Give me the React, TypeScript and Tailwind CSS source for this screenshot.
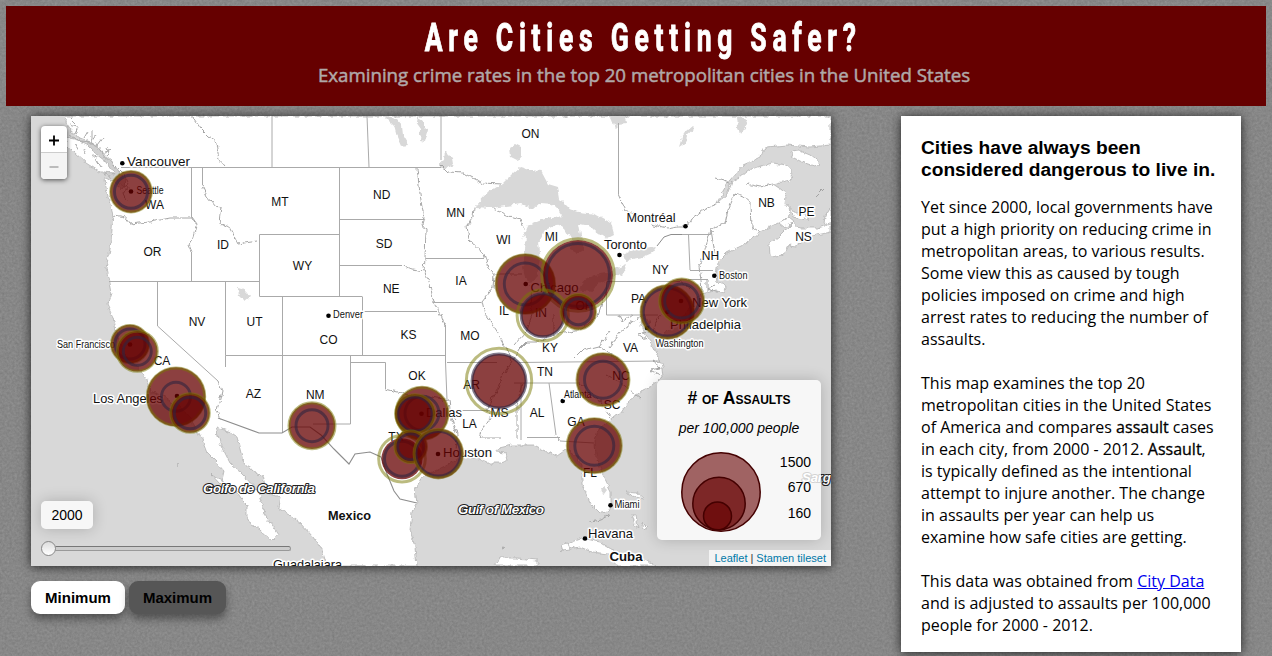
import React from 'react';

type Circle = { x: number; y: number; max: number; now: number; min: number };
type Label = { t: string; x: number; y: number; s?: number; w?: number; bold?: boolean };

const circles: Circle[] = [
  { x: 131, y: 191.7, max: 20.3, now: 21, min: 16.5 },
  { x: 130, y: 344, max: 18.5, now: 19.2, min: 15 },
  { x: 137.3, y: 351.3, max: 20, now: 20.3, min: 14 },
  { x: 176, y: 396.7, max: 28.7, now: 29.5, min: 14.5 },
  { x: 190, y: 413, max: 19.3, now: 19.8, min: 15.7 },
  { x: 312, y: 425.7, max: 23, now: 23.2, min: 16 },
  { x: 422, y: 413.3, max: 26, now: 26.7, min: 17 },
  { x: 415, y: 414, max: 19.3, now: 20, min: 17 },
  { x: 402, y: 458.7, max: 23.3, now: 20.5, min: 17.5 },
  { x: 410.7, y: 446.7, max: 15.8, now: 16.3, min: 13 },
  { x: 438.3, y: 453.7, max: 24.2, now: 25, min: 22.3 },
  { x: 499, y: 381, max: 32.7, now: 27, min: 27 },
  { x: 525.3, y: 284, max: 29.2, now: 30, min: 21 },
  { x: 578, y: 275, max: 36.3, now: 35, min: 31.5 },
  { x: 542.7, y: 315.3, max: 25.6, now: 21.5, min: 21.5 },
  { x: 578.3, y: 311.7, max: 17.3, now: 17.8, min: 13 },
  { x: 667.3, y: 312, max: 26.2, now: 27, min: 24 },
  { x: 681.7, y: 301, max: 22, now: 22.5, min: 17 },
  { x: 603, y: 379.7, max: 26, now: 26.6, min: 18.5 },
  { x: 594.3, y: 445.7, max: 27, now: 27.6, min: 19.5 },
];

const states: Label[] = [
  { t: 'WA', x: 154.5, y: 209 }, { t: 'OR', x: 152.5, y: 255.5 }, { t: 'ID', x: 223, y: 248.5 },
  { t: 'MT', x: 280, y: 205.5 }, { t: 'WY', x: 302.5, y: 270 }, { t: 'NV', x: 197, y: 325.5 },
  { t: 'UT', x: 254.5, y: 325.5 }, { t: 'CA', x: 162, y: 365 }, { t: 'AZ', x: 253.5, y: 398 },
  { t: 'NM', x: 315.3, y: 399 }, { t: 'CO', x: 328.5, y: 344.2 }, { t: 'ND', x: 381.7, y: 198.5 },
  { t: 'SD', x: 384, y: 248 }, { t: 'NE', x: 391.3, y: 293 }, { t: 'KS', x: 408.5, y: 338.5 },
  { t: 'OK', x: 417, y: 379.5 }, { t: 'TX', x: 396, y: 441 }, { t: 'MN', x: 455.5, y: 217 },
  { t: 'IA', x: 461, y: 285 }, { t: 'MO', x: 470, y: 339.5 }, { t: 'WI', x: 503.5, y: 244 },
  { t: 'MI', x: 551.5, y: 241 }, { t: 'IL', x: 504, y: 314.5 }, { t: 'IN', x: 541, y: 317 },
  { t: 'OH', x: 584.5, y: 310 }, { t: 'KY', x: 550, y: 352 }, { t: 'TN', x: 545, y: 376 },
  { t: 'AR', x: 471.5, y: 389 }, { t: 'MS', x: 499.5, y: 417 }, { t: 'AL', x: 537, y: 417 },
  { t: 'LA', x: 469.5, y: 428.3 }, { t: 'GA', x: 576, y: 426 }, { t: 'SC', x: 612, y: 408.5 },
  { t: 'NC', x: 621, y: 380 }, { t: 'VA', x: 630.5, y: 351.5 }, { t: 'FL', x: 590, y: 477 },
  { t: 'PA', x: 638.5, y: 303 }, { t: 'NY', x: 660.5, y: 273.5 }, { t: 'NH', x: 710.5, y: 260 },
  { t: 'NB', x: 766.5, y: 206.5 }, { t: 'PE', x: 806.5, y: 216 }, { t: 'NS', x: 803.5, y: 241 },
  { t: 'ON', x: 530.5, y: 137.5 },
];

const cities: Label[] = [
  { t: 'Vancouver', x: 127, y: 166, s: 13.4, w: 63 }, { t: 'Seattle', x: 136.5, y: 194, s: 10, w: 27 },
  { t: 'San Francisco', x: 57, y: 348, s: 10.2, w: 58 }, { t: 'Los Angeles', x: 93, y: 402.5, s: 13.4, w: 70 },
  { t: 'Denver', x: 333, y: 318, s: 10.2, w: 30 }, { t: 'Dallas', x: 426, y: 417, s: 13.4, w: 36 },
  { t: 'Houston', x: 443, y: 457, s: 13.4, w: 49 }, { t: 'Chicago', x: 530.5, y: 292, s: 13.4, w: 48 },
  { t: 'Toronto', x: 604, y: 248.5, s: 13.4, w: 43 }, { t: 'Montréal', x: 626.5, y: 222, s: 13.4, w: 49 },
  { t: 'Boston', x: 719, y: 278.5, s: 10.2, w: 28.5 }, { t: 'New York', x: 692, y: 307, s: 13.4, w: 55 },
  { t: 'Philadelphia', x: 670, y: 329, s: 13.4, w: 71 }, { t: 'Washington', x: 655.5, y: 347, s: 10.2, w: 48 },
  { t: 'Atlanta', x: 564, y: 398, s: 10, w: 27.5 }, { t: 'Miami', x: 614.5, y: 508, s: 10.2, w: 25 },
  { t: 'Havana', x: 588, y: 538, s: 13.4, w: 45 }, { t: 'Guadalajara', x: 273, y: 569, s: 13.4, w: 69 },
  { t: 'Mexico', x: 328, y: 519.5, s: 13.2, w: 43, bold: true }, { t: 'Cuba', x: 609.5, y: 561, s: 13.2, w: 33, bold: true },
];

const dots = [
  [122.3, 163.3], [131, 191.5], [130, 344.5], [177, 396], [328.5, 315.7], [421.5, 413.7], [438, 454],
  [525.7, 284], [619.5, 255], [685.5, 226.2], [714.3, 275.8], [681, 301], [667.5, 312], [647, 328],
  [562.7, 401], [610.5, 505.3], [585, 538.5],
];

const land =
  'M66 116L65 122L71 131L80 138L88 141L97 146L104 156L112 162L117 170L124 178L126 186L121 190L116 183L105 177L106 187L108 197L113 215L112 230L110 250L106 268L109 282L111 293L107 305L113 317L116 330L122 350L130 363L137 366L148 380L150 391L163 396L170 401L180 407L190 418L200 435L207 453L217 463L224 471L222 480L213 476L211 474L220 484L233 487L241 499L247 505L247 520L260 530L272 541L278 534L272 525L264 514L262 503L257 490L243 475L230 463L220 443L216 427L230 432L237 437L243 461L252 471L263 477L267 493L280 497L278 507L290 515L300 523L313 537L322 550L327 566' +
  'L417 566L415 547L410 530L412 512L417 503L415 490L423 477L443 467L460 458L477 458L488 463L500 463L508 460L506 453L497 452L499 448L512 445L533 445L547 452L557 456L567 449L575 455L582 466L582 485L590 503L600 513L608 512L611 503L611 491L602 473L596 456L595 442L598 430L613 417L622 413L630 400L643 390L652 386L663 377L662 368L660 360L652 343L645 335L641 322L646 315L650 328L657 339L664 336L676 320L685 315L694 300L701 294L710 292L717 290L724 292L726 287L717 282L716 274L718 262L727 253L747 243L760 232L772 226L786 219L790 214L789 208L785 203L786 196L782 190L773 184L790 180L792 173L787 165L773 163L757 167L747 171L739 178L732 182L728 193L717 203L719 199L730 180L743 165L752 161L760 157L762 150L767 147L787 145L810 147L831 145L831 116Z';

const islands = [
  'M66 137L75 139L88 145L98 153L108 162L114 172L110 176L100 172L86 163L74 152L66 144Z',
  'M769 244L778 238L786 230L793 223L784 227L779 223L788 218L800 228L818 228L831 224L831 232L812 236L803 241L796 246L789 245L786 251L777 258L770 254Z',
  'M790 206L795 213L801 213L810 218L800 220L793 216Z',
  'M825 216L831 206L831 221L824 224Z',
  'M790 152L800 151L810 155L821 164L814 166L802 162L792 157Z',
  'M560 552L569 543L582 538L600 542L611 549L631 556L648 561L655 566L618 566L608 554L592 552L580 547L570 549Z',
  'M500 558L517 558L537 560L537 566L494 566Z',
  'M561 545L568 543L570 550L563 551Z',
  'M625 492L637 493L644 499L636 497Z',
  'M632 514L636 514L638 529L635 524Z',
  'M642 522L647 527L645 531Z',
];

const lakes = [
  'M474 207L486 194L503 183L512 174L520 167L530 170L541 171L548 184L558 187L560 199L567 206L574 214L566 214L552 204L540 203L533 209L522 204L506 206L492 208Z',
  'M522 240L528 226L539 221L551 217L568 216L571 223L556 225L545 230L538 243L540 260L537 276L531 283L525 279L523 267L525 249L526 234Z',
  'M552 201L562 207L579 212L595 214L611 223L614 234L606 238L598 233L589 226L579 224L582 240L584 250L577 254L570 250L571 239L565 229L558 225L564 218Z',
  'M623 254L631 250L645 248L657 246L652 253L643 257L627 260Z',
  'M577 290L584 280L594 275L607 273L617 268L627 264L624 272L615 277L601 283L590 292Z',
  'M510 147L515 144L521 147L521 156L517 161L511 158Z',
  'M384 116L396 119L402 126L403 135L409 145L401 146L397 137L394 126Z',
  'M417 117L424 121L424 128L428 131L425 142L420 141L421 129L416 122Z',
  'M440 163L444 160L445 151L452 158L453 164L446 169L440 169Z',
  'M604 116L625 116L626 123L619 124L615 128L612 120Z',
  'M679 147L682 137L686 131L692 126L695 129L687 136L685 143Z',
  'M237 287L243 288L250 297L245 301L239 295Z',
  'M600 489L604 487L607 490L604 494L601 492Z',
  'M737 117L744 118L747 125L743 131L740 136L738 127Z',
];

const straight =
  'M121 167.5H441M272 116V167M367 116L369 167M441 116V160M191.5 167V217L193 220M202.5 167V185M109 281.5H259M157.5 281.5V326L218 381M191.5 252V281.5M225.5 281.5V355.5V367M259.5 234.5V296.5M259.5 234.5H339.5M259.5 296.5H362M339.5 167V296M339.5 219.5H424M339.5 265.5H402M282.5 296.5V433M362.5 296.5V355M225.5 355.5H446M364.5 311.5H437M445.5 325V362L447 400M350.5 355V424H313M350.5 362.5H385.5V389M425.5 258.5H484M433 302.5H481M447 362.5H497M514 383H580M519 362.5L660 361M499 410.5H461M521 383V440M549 383L556 435M527 437.5H560M560 441L594 443M606.5 282V315H658M606.5 281.5H680M682 234.5H710M688.5 234.5L690 270M690 270.5H713M688 279.5H708M618.5 123V194M448 410L456 420';

const wiggly = [
  'M192 116L201 129L208 136L216 142L219 160L225 167',
  'M202 185L207 196L216 207L222 208L220 223L229 227L238 244L258 241',
  'M113 215L125 217L130 224L150 222L170 218H192',
  'M192 217L197 224L192 240L189 245L192 252',
  'M417 168L420 194L424 218L422 225L426 230L425 258L424 270L430 285L434 303L441 314L445 326',
  'M402 265L412 269L424 271',
  'M441 165L448 172L463 173L475 179L483 183L501 184',
  'M474 207L473 218L467 226L469 240L484 254L488 267L494 275L493 288L482 302L485 315L493 326L502 340L508 351L512 361L503 375L499 388L492 398L487 410L491 416L482 430L480 438H502',
  'M493 209L507 215L520 219L524 230',
  'M494 274H522M531 285L532 315L526 332L513 346M553 315V335M606 292L598 316L580 330L570 332L550 335L540 342L526 342L519 349L513 360',
  'M218 381L222 391L217 410L220 419',
  'M385 389L398 392L415 397L432 397L449 400L451 418L457 434L456 452',
  'M522 383L517 405V440M556 435L560 441M607 375L620 382L640 398M580 383L598 399L610 417M573 360L583 350L599 346L611 331M599 346L619 361',
  'M618 194L626 211L646 219M650 224L667 228L678 226L686 226L692 218L703 210L719 203',
  'M702 292L701 280L699 267L707 243L711 230M711 230L716 260M711 230L725 223L728 210L735 194L744 197L751 203L752 227L760 232',
  'M716 178L731 182M747 184L760 187L773 184M707 292V281M657 339L654 327L661 314M680 280L691 289',
  'M646 313L630 324L620 332L609 347M619 315L622 322L633 314',
];

const coast = [land, ...islands];

function MapDrawing() {
  return (
    <svg viewBox="31 116 800 450" width="800" height="450" className="block">
      <defs>
        <filter id="rough" x="-2%" y="-2%" width="104%" height="104%" colorInterpolationFilters="sRGB">
          <feTurbulence type="fractalNoise" baseFrequency="0.16" numOctaves="3" seed="4" result="n" />
          <feDisplacementMap in="SourceGraphic" in2="n" scale="5.5" xChannelSelector="R" yChannelSelector="G" />
        </filter>
      </defs>
      <rect x="31" y="116" width="800" height="450" fill="#d8d8d8" />
      <g filter="url(#rough)" strokeLinejoin="round">
        {coast.map((d) => <path key={d} d={d} fill="#fff" stroke="#b3b3b3" strokeWidth="0.8" />)}
        {lakes.map((d) => <path key={d} d={d} fill="#d8d8d8" />)}
        <path
          d="M68 134L80 141L91 142L100 150L108 157L116 166L124 174L129 184L127 190L123 193L126 200M91 142L96 135M97 145L103 137M84 138L88 131M75 134L78 127M104 152L111 150M109 156L106 148M69 117L75 123M70 125L77 127M92 141L92 130M83 148L86 154M91 155L98 158M75 144L79 151M96 159L100 166"
          fill="none" stroke="#aaa" strokeWidth="1"
        />
        <path d="M88 142L98 147L105 158L114 164L120 174L126 179L125 187L118 181L104 173L114 174L105 161L96 154L88 146Z" fill="#d0d0d0" stroke="#aaa" strokeWidth="0.7" />
      </g>
      <g filter="url(#rough)" fill="none" stroke="#9c9c9c" strokeWidth="0.9">
        {wiggly.map((d) => <path key={d} d={d} />)}
        <path d="M646 340L638 334L650 332L644 323M660 363L652 359L660 368L650 370L660 375M716 284L707 289L718 292M589 521L602 519L609 515M177 463V466M502 548L504 549M817 196L824 189" />
      </g>
      <path d={straight} fill="none" stroke="#aaa" strokeWidth="1" />
      <path
        d="M218 418L259 433H282L292 427H310L321 435L334 449L349 464L355 454L370 452L381 457L387 474L394 491L400 499L417 503"
        fill="none" stroke="#8d8d8d" strokeWidth="1.1"
      />
      <path d="M657 246L664 237L671 234.5H682" fill="none" stroke="#8d8d8d" />

      {dots.map(([x, y]) => <circle key={`${x}`} cx={x} cy={y} r="2.3" fill="#000" />)}
      <g fill="#111" stroke="#fff" strokeWidth="3" strokeLinejoin="round" style={{ paintOrder: 'stroke' }}>
        {states.map((l) => (
          <text key={l.t} x={l.x} y={l.y} fontSize="12" textAnchor="middle">{l.t}</text>
        ))}
        {cities.map((l) => (
          <text key={l.t} x={l.x} y={l.y} fontSize={l.s} textLength={l.w} lengthAdjust="spacingAndGlyphs" fontWeight={l.bold ? 700 : 400}>{l.t}</text>
        ))}
      </g>
      <g fill="#fff" stroke="#222" strokeWidth="2.1" fontSize="13.4" fontStyle="italic" fontWeight="700" strokeLinejoin="round" style={{ paintOrder: 'stroke' }}>
        <text x="203" y="493" textLength="112">Golfo de California</text>
        <text x="458" y="513.5" textLength="86">Gulf of Mexico</text>
        <text x="802" y="482" textLength="29">Sarg</text>
      </g>

      {circles.map((c) => (
        <g key={c.x}>
          <circle cx={c.x} cy={c.y} r={c.now} fill="#660000" fillOpacity="0.75" />
          <circle cx={c.x} cy={c.y} r={c.min} fill="none" stroke="#2e2440" strokeOpacity="0.6" strokeWidth="2.9" />
          <circle cx={c.x} cy={c.y} r={c.max} fill="none" stroke="#777700" strokeOpacity="0.5" strokeWidth="3" />
        </g>
      ))}
    </svg>
  );
}

function Legend() {
  return (
    <section className="absolute right-[10px] bottom-[26px] flex h-40 w-[164px] flex-col rounded-[5px] bg-white/80 pt-[7px] text-black shadow-[0_0_15px_rgba(0,0,0,0.2)]">
      <h2 className="text-center text-[17.5px] leading-[22px] font-bold whitespace-nowrap [font-variant-caps:small-caps]"># of Assaults</h2>
      <p className="mt-[9px] text-center text-[14px] leading-5 italic">per 100,000 people</p>
      <div className="flex pt-[12px] pl-[22px]">
        <svg width="84" height="84" viewBox="0 0 84 84" fill="#660000" stroke="#400" strokeWidth="1.5">
          <circle cx="42" cy="42" r="39.2" fillOpacity="0.6" />
          <circle cx="40" cy="53.5" r="26.2" fillOpacity="0.6" />
          <circle cx="38.5" cy="66" r="14" fillOpacity="0.6" />
        </svg>
        <ul className="flex w-[48px] flex-col text-right text-[14px] leading-[25px]">
          <li>1500</li>
          <li>670</li>
          <li className="pt-px">160</li>
        </ul>
      </div>
    </section>
  );
}

function ZoomControl() {
  return (
    <div className="absolute top-[10px] left-[10px] flex w-[26px] flex-col overflow-hidden rounded-[4px] bg-white shadow-[0_1px_5px_rgba(0,0,0,0.65)]">
      <button className="flex h-[27px] items-center justify-center border-b border-[#ccc] pt-px" aria-label="Zoom in">
        <svg width="12" height="12" stroke="#000" strokeWidth="1.8"><path d="M1 6.5H11M6 1.5V11.5" /></svg>
      </button>
      <button className="flex h-[26px] items-center justify-center bg-[#f4f4f4]" aria-label="Zoom out">
        <svg width="10" height="10" stroke="#bbb" strokeWidth="2"><path d="M0.5 6H9.5" /></svg>
      </button>
    </div>
  );
}

export default function App() {
  return (
    <div className="relative isolate h-[656px] w-[1272px] overflow-hidden bg-[#858585] p-[6px] font-['Liberation_Sans',Arial,sans-serif] text-black">
      <svg className="absolute inset-0 -z-10" width="1272" height="656">
        <filter id="concrete" x="0" y="0" width="100%" height="100%" colorInterpolationFilters="sRGB">
          <feTurbulence type="fractalNoise" baseFrequency="0.4" numOctaves="4" seed="8" />
          <feColorMatrix values="0.1 0.04 0 0 0.46  0.1 0.04 0 0 0.46  0.1 0.04 0 0 0.46  0 0 0 0 1" />
        </filter>
        <rect width="1272" height="656" filter="url(#concrete)" />
      </svg>

      <header className="flex h-[100px] flex-col items-center bg-[#660000]">
        <h1 className="mt-[7px] ml-[14px] h-[50px] origin-center scale-x-[0.68] font-['Roboto',sans-serif] text-[39px] leading-[50px] font-bold tracking-[8.4px] whitespace-nowrap text-white [-webkit-text-stroke:0.9px_#fff]">
          Are Cities Getting Safer?
        </h1>
        <p className="ml-4 font-['Open_Sans',sans-serif] text-[18.7px] leading-6 whitespace-nowrap text-[#b0a8a8] [-webkit-text-stroke:0.5px_#b0a8a8]">
          Examining crime rates in the top 20 metropolitan cities in the United States
        </p>
      </header>

      <main className="flex items-start justify-between pt-[10px] pr-[25px] pl-[25px]">
        <div className="w-[800px]">
          <div className="relative h-[450px] overflow-hidden bg-[#d8d8d8] shadow-[0_1px_10px_rgba(0,0,0,0.75)]">
            <MapDrawing />
            <ZoomControl />
            <div className="absolute bottom-[37px] left-[10px] flex h-7 w-[52px] items-center justify-center rounded-[5px] bg-white/80 text-[14px] shadow-[0_0_15px_rgba(0,0,0,0.2)]">2000</div>
            <div className="absolute bottom-[10px] left-[10px] flex h-[15px] w-[250px] items-center">
              <span className="h-[15px] w-[15px] rounded-full border border-[#888] bg-linear-to-b from-[#ddd] to-white" />
              <span className="-ml-px h-[5px] flex-1 rounded-r-[3px] border border-[#999] border-t-[#777] bg-[#ccc]" />
            </div>
            <Legend />
            <div className="absolute right-0 bottom-0 flex h-4 items-center gap-[3px] bg-white/70 px-[5px] text-[11px] text-[#333]">
              <a className="text-[#0078a8]">Leaflet</a>
              <span>|</span>
              <a className="text-[#0078a8]">Stamen tileset</a>
            </div>
          </div>
          <div className="mt-[15px] flex gap-1 text-[15px] leading-[33px] font-bold">
            <button className="h-[33px] w-[94px] rounded-[9px] bg-white shadow-[0_5px_8px_rgba(0,0,0,0.4)]">Minimum</button>
            <button className="h-[33px] w-[97px] rounded-[9px] bg-[#565656] shadow-[0_5px_8px_rgba(0,0,0,0.4)]">Maximum</button>
          </div>
        </div>

        <aside className="h-[536px] w-[340px] bg-white px-5 pt-[21px] shadow-[0_1px_10px_rgba(0,0,0,0.75)]">
          <h2 className="text-[19.2px] leading-[22px] font-bold whitespace-nowrap">
            Cities have always been<br />considered dangerous to live in.
          </h2>
          <div className="mt-[15px] flex flex-col gap-[22px] font-['Open_Sans',sans-serif] text-[16px] leading-[22px] whitespace-nowrap">
            <p>
              Yet since 2000, local governments have<br />put a high priority on reducing crime in<br />metropolitan areas, to various results.<br />
              Some view this as caused by tough<br />policies imposed on crime and high<br />arrest rates to reducing the number of<br />assaults.
            </p>
            <p>
              This map examines the top 20<br />metropolitan cities in the United States<br />of America and compares{' '}
              <span className="[-webkit-text-stroke:0.3px_#000]">assault</span> cases<br />in each city, from 2000 - 2012.{' '}
              <span className="[-webkit-text-stroke:0.3px_#000]">Assault</span>,<br />is typically defined as the intentional<br />
              attempt to injure another. The change<br />in assaults per year can help us<br />examine how safe cities are getting.
            </p>
            <p>
              This data was obtained from <a className="text-[#0000ee] underline">City Data</a><br />
              and is adjusted to assaults per 100,000<br />people for 2000 - 2012.
            </p>
          </div>
        </aside>
      </main>
    </div>
  );
}
